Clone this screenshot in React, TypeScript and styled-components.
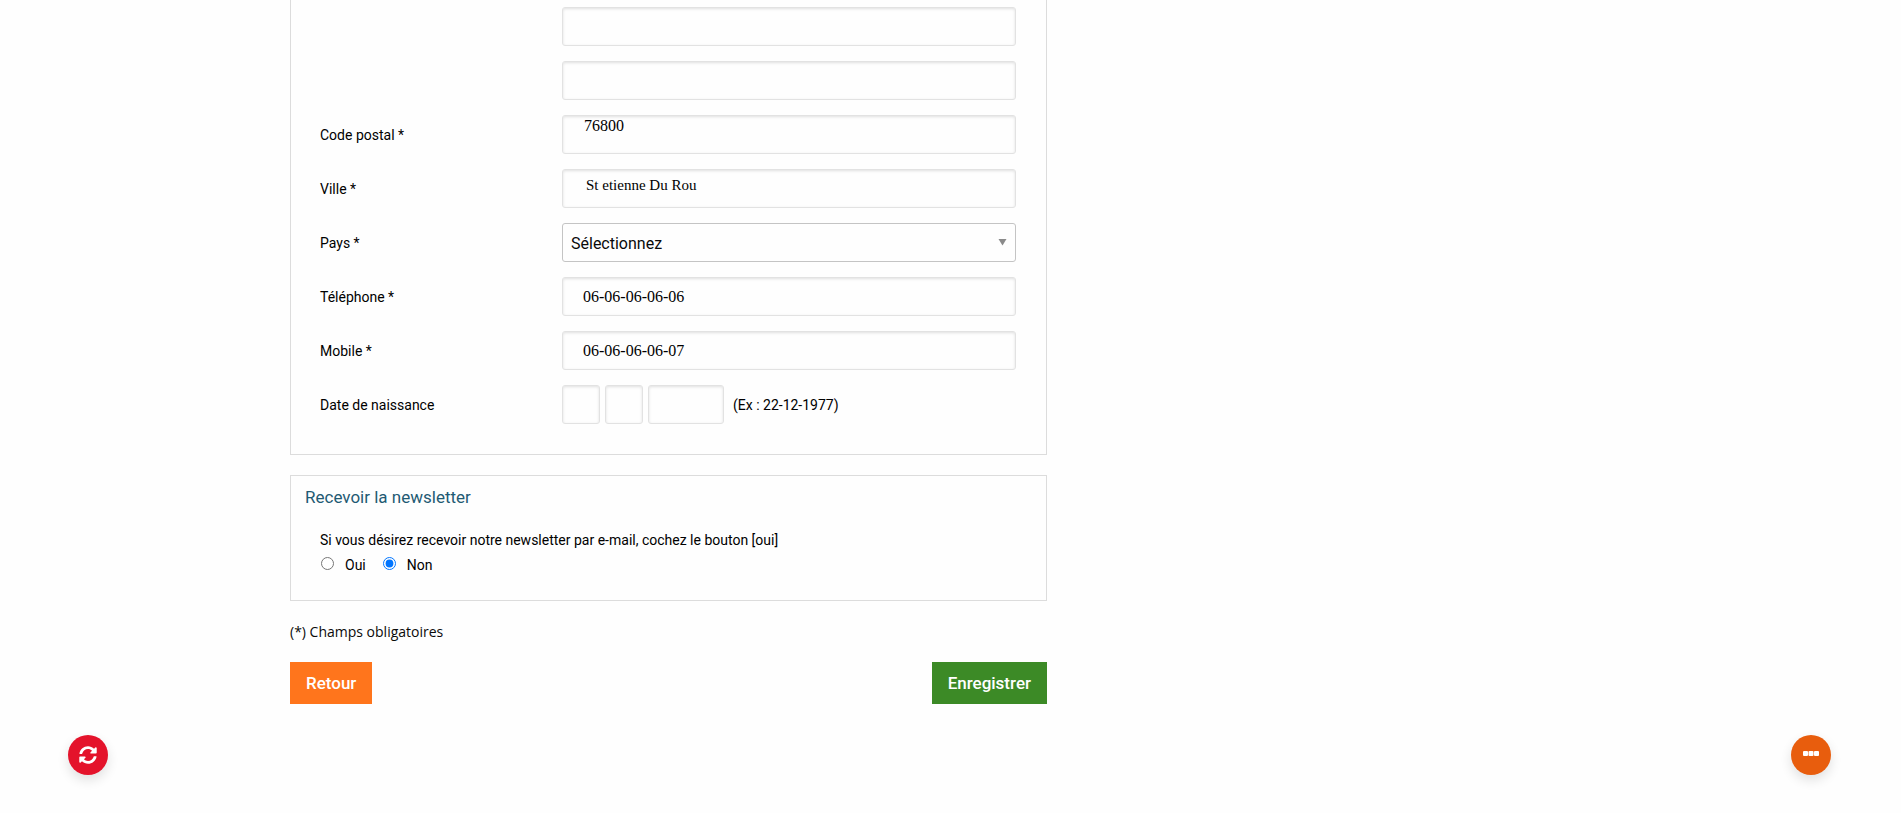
import React from "react";
import styled, { createGlobalStyle } from "styled-components";

const GlobalStyle = createGlobalStyle`
  *, *::before, *::after { box-sizing: border-box; }
  body {
    margin: 0;
    background: #fefefe;
    color: #0a0a0a;
    font-family: Roboto, "Liberation Sans", sans-serif;
    font-size: 14px;
    line-height: 20px;
  }
`;

const Page = styled.main`
  max-width: 1321px;
  margin: 0 auto;
  padding-bottom: 109px;
`;

const Form = styled.form`
  max-width: 757px;
`;

const Panel = styled.section<{ $continued?: boolean }>`
  border: 1px solid #dcdcdc;
  border-top-width: ${(p) => (p.$continued ? "0" : "1px")};
  padding: ${(p) => (p.$continued ? "7px 30px 30px 29px" : "10px 30px 25px 29px")};
  margin-bottom: 20px;
`;

const Rows = styled.div`
  display: flex;
  flex-direction: column;
  gap: 15px;
`;

const Row = styled.div`
  display: grid;
  grid-template-columns: 242px 1fr;
  align-items: center;
`;

const Label = styled.label`
  grid-column: 1;
  color: #000;
`;

const Field = styled.input<{ $inset?: number; $lift?: number; $size?: number }>`
  grid-column: 2;
  width: 100%;
  height: 39px;
  padding: 0 8px ${(p) => p.$lift ?? 0}px ${(p) => p.$inset ?? 8}px;
  border: 1px solid #e2e2e2;
  border-radius: 3px;
  background: #fefefe;
  box-shadow: inset 0 1px 3px rgba(0, 0, 0, 0.12);
  color: #000;
  font-family: "Liberation Serif", serif;
  font-size: ${(p) => p.$size ?? 16}px;
`;

const SelectBox = styled.div`
  position: relative;
  grid-column: 2;
`;

const Select = styled.select`
  display: block;
  width: 100%;
  height: 39px;
  padding: 2px 24px 0 8px;
  border: 1px solid #c4c4c4;
  border-radius: 3px;
  background: #fefefe;
  appearance: none;
  color: #0a0a0a;
  font-family: Roboto, "Liberation Sans", sans-serif;
  font-size: 16px;
`;

const Arrow = styled.svg`
  position: absolute;
  top: 16px;
  right: 9px;
  pointer-events: none;
`;

const DateFields = styled.div`
  grid-column: 2;
  display: flex;
  align-items: center;
  gap: 5px;
`;

const DateField = styled(Field)<{ $wide?: boolean }>`
  width: ${(p) => (p.$wide ? "76px" : "38px")};
`;

const Hint = styled.span`
  padding-left: 4px;
  color: #000;
`;

const Title = styled.h2`
  margin: 0 0 22px -15px;
  color: #1f5a73;
  font-size: 17px;
  font-weight: 400;
  line-height: 22px;
`;

const Question = styled.p`
  margin: 0;
  color: #000;
`;

const Choices = styled.div`
  display: flex;
  gap: 16px;
  padding-top: 5px;
`;

const Choice = styled.label`
  display: flex;
  align-items: center;
  gap: 11px;
  color: #000;
`;

const Radio = styled.input`
  width: 13px;
  height: 13px;
  margin: 0 0 3px 1px;
`;

const Note = styled.p`
  margin: 0 0 20px;
  font-family: "Open Sans", sans-serif;
  line-height: 21px;
`;

const Actions = styled.div`
  display: flex;
  justify-content: space-between;
`;

const Button = styled.button<{ $color: string }>`
  height: 42px;
  padding: 0 16px;
  border: 0;
  background: ${(p) => p.$color};
  color: #fff;
  font-family: Roboto, "Liberation Sans", sans-serif;
  font-size: 17px;
  font-weight: 500;
`;

const RoundButton = styled.button<{ $side: "left" | "right" }>`
  position: fixed;
  bottom: 38px;
  ${(p) => (p.$side === "left" ? "left: 68px" : "right: 70px")};
  display: flex;
  align-items: center;
  justify-content: center;
  width: 40px;
  height: 40px;
  padding: 0;
  border: 0;
  border-radius: 50%;
  background: ${(p) => (p.$side === "left" ? "#e4132b" : "#e85d0d")};
  box-shadow: 0 5px 12px rgba(0, 0, 0, 0.12);
  color: #fff;
`;

export default function App() {
  return (
    <>
      <GlobalStyle />
      <Page>
        <Form onSubmit={(e) => e.preventDefault()}>
          <Panel $continued>
            <Rows>
              <Row>
                <Field aria-label="Adresse 2" />
              </Row>
              <Row>
                <Field aria-label="Adresse 3" />
              </Row>
              <Row>
                <Label htmlFor="zip">Code postal *</Label>
                <Field id="zip" defaultValue="76800" $inset={21} $lift={17} />
              </Row>
              <Row>
                <Label htmlFor="city">Ville *</Label>
                <Field id="city" defaultValue="St etienne Du Rou" $inset={23} $lift={6} $size={15} />
              </Row>
              <Row>
                <Label htmlFor="country">Pays *</Label>
                <SelectBox>
                  <Select id="country">
                    <option>Sélectionnez</option>
                  </Select>
                  <Arrow width="9" height="7" viewBox="0 0 9 7" aria-hidden="true">
                    <path d="M0.5 0h8L4.5 6.5z" fill="#8a8a8a" />
                  </Arrow>
                </SelectBox>
              </Row>
              <Row>
                <Label htmlFor="phone">Téléphone *</Label>
                <Field id="phone" type="tel" defaultValue="06-06-06-06-06" $inset={20} />
              </Row>
              <Row>
                <Label htmlFor="mobile">Mobile *</Label>
                <Field id="mobile" type="tel" defaultValue="06-06-06-06-07" $inset={20} />
              </Row>
              <Row>
                <Label htmlFor="day">Date de naissance</Label>
                <DateFields>
                  <DateField id="day" aria-label="Jour" />
                  <DateField aria-label="Mois" />
                  <DateField aria-label="Année" $wide />
                  <Hint>(Ex : 22-12-1977)</Hint>
                </DateFields>
              </Row>
            </Rows>
          </Panel>

          <Panel>
            <Title>Recevoir la newsletter</Title>
            <Question>
              Si vous désirez recevoir notre newsletter par e-mail, cochez le bouton [oui]
            </Question>
            <Choices>
              <Choice>
                <Radio type="radio" name="newsletter" />
                Oui
              </Choice>
              <Choice>
                <Radio type="radio" name="newsletter" defaultChecked />
                Non
              </Choice>
            </Choices>
          </Panel>

          <Note>(*) Champs obligatoires</Note>
          <Actions>
            <Button type="button" $color="#ff751c">Retour</Button>
            <Button type="submit" $color="#3c8a26">Enregistrer</Button>
          </Actions>
        </Form>
      </Page>

      <RoundButton type="button" $side="left" aria-label="Actualiser">
        <svg width="18" height="18" viewBox="0 0 512 512" fill="currentColor" aria-hidden="true">
          <path d="M370.7 133.3C339.5 104 298.9 88 255.8 88c-77.5.1-144.3 53.2-162.8 126.9-1.3 5.4-6.1 9.1-11.7 9.1H24.1c-7.5 0-13.2-6.8-11.8-14.2C33.9 94.9 134.8 8 256 8c66.4 0 126.8 26.1 171.3 68.7L463 41C478.1 25.9 504 36.6 504 57.9V192c0 13.3-10.7 24-24 24H345.9c-21.4 0-32.1-25.9-17-41l41.8-41.7zM32 296h134.1c21.4 0 32.1 25.9 17 41l-41.8 41.8c31.3 29.3 71.8 45.3 114.9 45.3 77.4-.1 144.3-53.1 162.8-126.8 1.3-5.4 6.1-9.1 11.7-9.1h57.3c7.5 0 13.2 6.8 11.8 14.2C478.1 417.1 377.2 504 256 504c-66.4 0-126.8-26.1-171.3-68.7L49 471C33.9 486.1 8 475.4 8 454.1V320c0-13.3 10.7-24 24-24z" />
        </svg>
      </RoundButton>
      <RoundButton type="button" $side="right" aria-label="Plus d'options">
        <svg width="16" height="8" viewBox="0 0 16 8" fill="currentColor" aria-hidden="true">
          <rect x="0" y="0" width="5" height="5" rx="1" />
          <rect x="5.5" y="0" width="5" height="5" rx="1" />
          <rect x="11" y="0" width="5" height="5" rx="1" />
        </svg>
      </RoundButton>
    </>
  );
}
